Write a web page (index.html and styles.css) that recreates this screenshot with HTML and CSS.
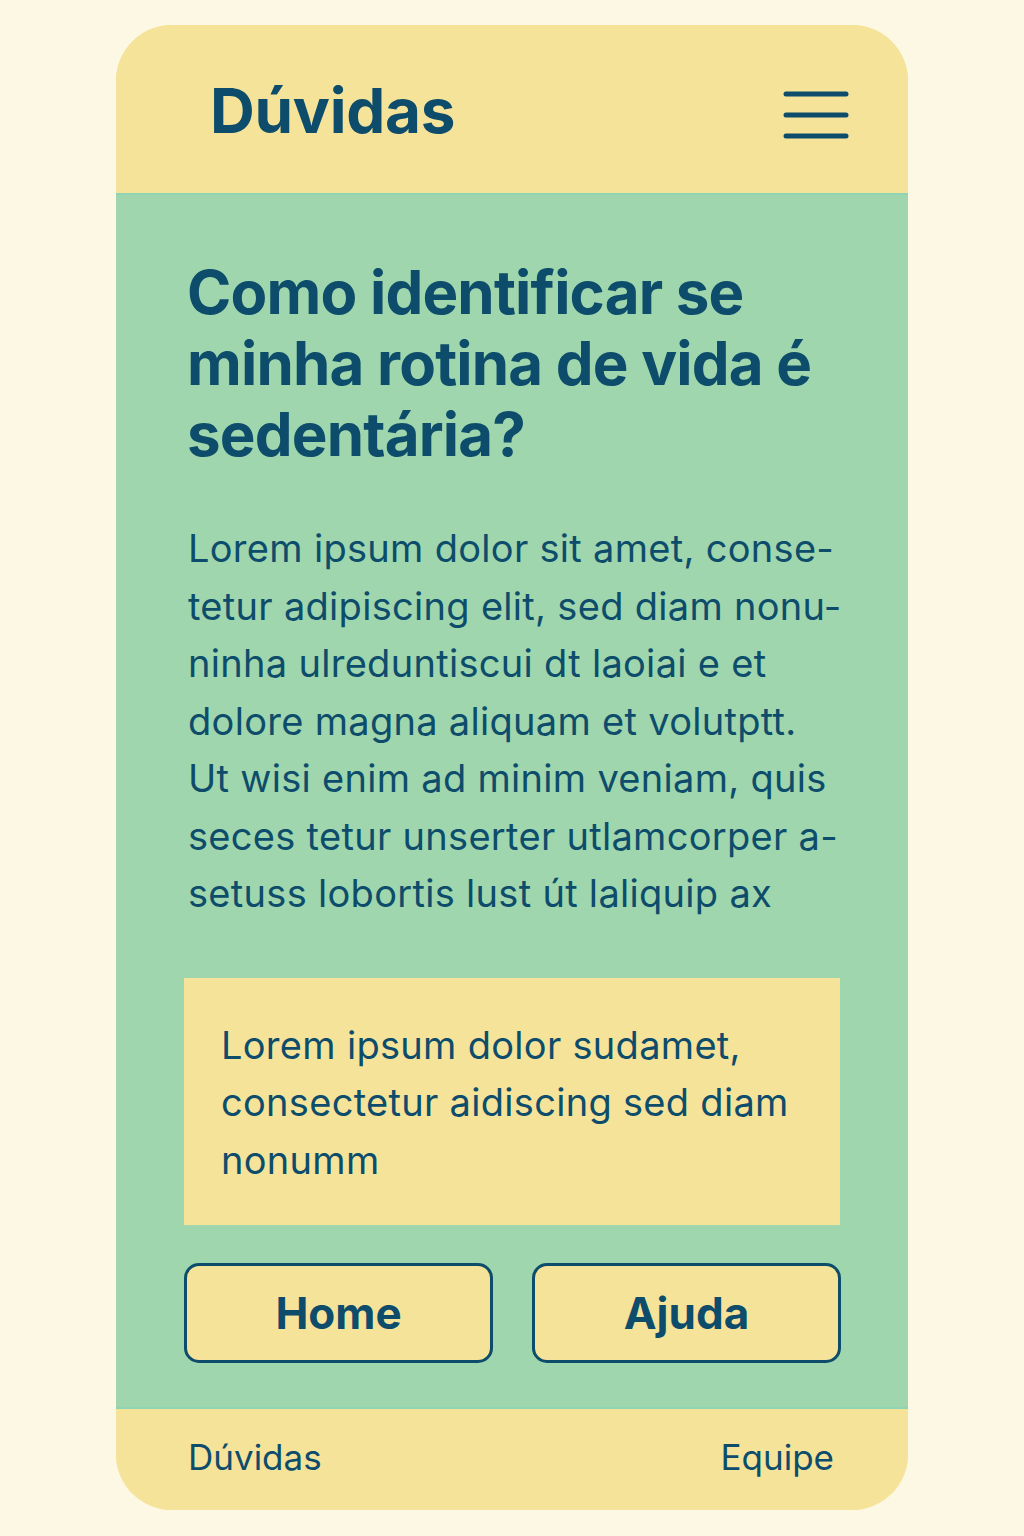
FILE: index.html
```html
<!DOCTYPE html>
<html lang="pt-BR">
<head>
<meta charset="utf-8">
<title>Dúvidas</title>
<link rel="stylesheet" href="styles.css">
</head>
<body>
<div class="card">
  <header class="header">
    <h1 class="brand">Dúvidas</h1>
    <button class="menu" aria-label="Menu">
      <svg width="66" height="50" viewBox="0 0 66 50">
        <g stroke="#0d4d6b" stroke-width="5" stroke-linecap="round">
          <line x1="3" y1="4" x2="63" y2="4"/>
          <line x1="3" y1="25" x2="63" y2="25"/>
          <line x1="3" y1="46" x2="63" y2="46"/>
        </g>
      </svg>
    </button>
  </header>
  <main class="main">
    <h2 class="question">Como identificar se<br>minha rotina de vida é<br>sedentária?</h2>
    <p class="answer">Lorem ipsum dolor sit amet, conse-<br>tetur adipiscing elit, sed diam nonu-<br>ninha ulreduntiscui dt laoiai e et<br>dolore magna aliquam et volutptt.<br>Ut wisi enim ad minim veniam, quis<br>seces tetur unserter utlamcorper a-<br>setuss lobortis lust út laliquip ax</p>
    <div class="note">Lorem ipsum dolor sudamet,<br>consectetur aidiscing sed diam<br>nonumm</div>
    <div class="actions">
      <a class="btn" href="#">Home</a>
      <a class="btn" href="#">Ajuda</a>
    </div>
  </main>
  <footer class="footer">
    <a class="flink" href="#">Dúvidas</a>
    <a class="flink" href="#">Equipe</a>
  </footer>
</div>
</body>
</html>
```
FILE: styles.css
```css
* { box-sizing: border-box; }
html, body { margin: 0; padding: 0; }
body {
  background: #fdf8e4;
  font-family: Inter, "Noto Sans", sans-serif;
  color: #0d4d6b;
  padding-top: 25px;
}
.card {
  width: 792px;
  height: 1485px;
  margin: 0 0 0 116px;
  border-radius: 56px;
  overflow: hidden;
  background: #f5e39a;
  display: flex;
  flex-direction: column;
}
.header {
  height: 168px;
  flex: none;
  display: flex;
  align-items: center;
  justify-content: space-between;
  padding: 0 59px 0 94px;
  background: #f5e39a;
}
.brand {
  margin: 0;
  font-size: 62px;
  font-weight: 700;
  letter-spacing: -0.3px;
  line-height: 1;
  padding-top: 4px;
}
.menu {
  border: 0;
  background: none;
  padding: 0;
  display: flex;
  margin-top: 12px;
}
.main {
  flex: 1 1 auto;
  min-height: 0;
  background: #a0d6ad;
  border-top: 2px solid #90d4b6;
  border-bottom: 2px solid #90d4b6;
  padding: 62px 68px 0 68px;
}
.question {
  margin: 0;
  padding-left: 3px;
  font-size: 60px;
  font-weight: 700;
  line-height: 71px;
  letter-spacing: -0.8px;
  white-space: nowrap;
}
.answer {
  margin: 50px 0 0;
  padding-left: 4px;
  font-size: 38px;
  font-weight: 400;
  line-height: 57.5px;
  letter-spacing: 0.3px;
  white-space: nowrap;
}
.note {
  margin-top: 55px;
  background: #f5e39a;
  padding: 39px 30px 36px 37px;
  font-size: 38px;
  line-height: 57.5px;
  letter-spacing: 0.3px;
  white-space: nowrap;
}
.actions {
  margin-top: 38px;
  display: grid;
  grid-template-columns: 1fr 1fr;
  gap: 39px;
  width: 657px;
}
.btn {
  height: 100px;
  display: flex;
  align-items: center;
  justify-content: center;
  border: 3px solid #0d4d6b;
  border-radius: 15px;
  background: #f5e39a;
  color: #0d4d6b;
  text-decoration: none;
  font-size: 44px;
  font-weight: 700;
}
.footer {
  height: 101px;
  flex: none;
  display: flex;
  align-items: center;
  justify-content: space-between;
  padding: 0 74px 6px 72px;
  background: #f5e39a;
}
.flink {
  color: #0d4d6b;
  text-decoration: none;
  font-size: 35px;
  font-weight: 400;
}
```
